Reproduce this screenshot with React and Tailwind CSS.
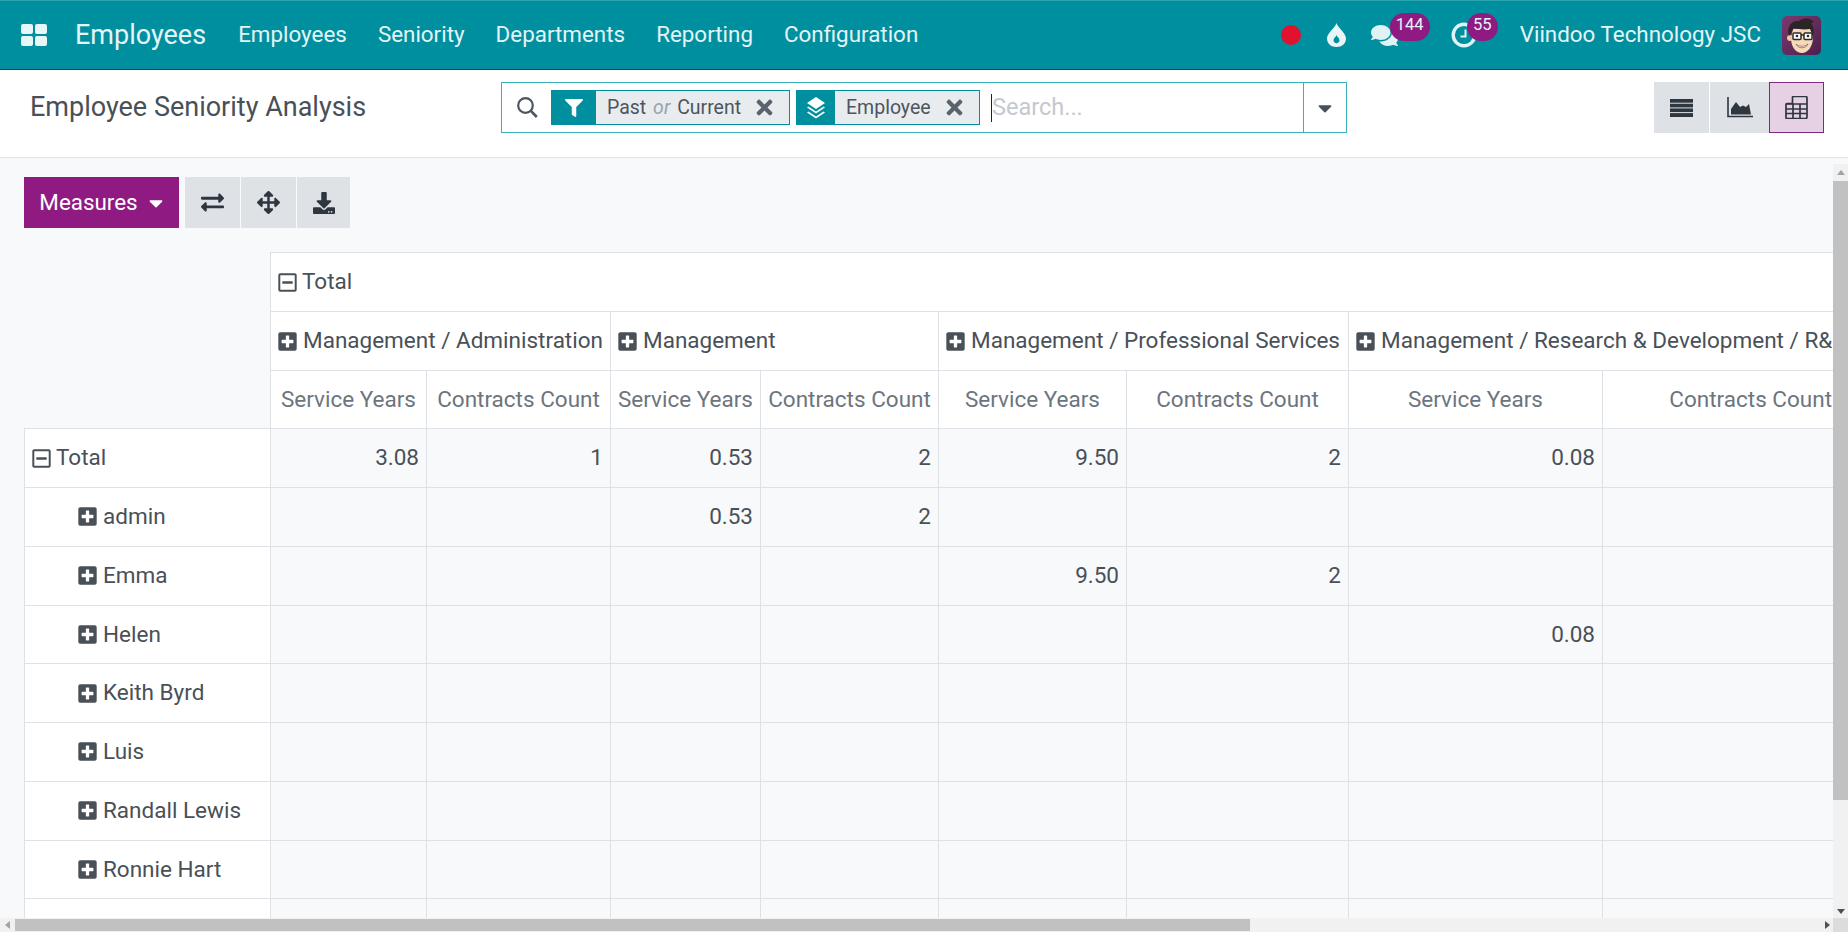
import React from 'react';
import {
  FaFilter, FaTimes, FaExchangeAlt, FaArrowsAlt, FaDownload,
  FaComments, FaPlusSquare, FaRegMinusSquare, FaCaretDown,
} from 'react-icons/fa';

const people = ['admin', 'Emma', 'Helen', 'Keith Byrd', 'Luis', 'Randall Lewis', 'Ronnie Hart'];

const values = {
  admin: { 2: '0.53', 3: '2' },
  Emma: { 4: '9.50', 5: '2' },
  Helen: { 6: '0.08' },
};

const colWidths = ['w-[246px]', 'w-[156px]', 'w-[184px]', 'w-[150px]', 'w-[178px]', 'w-[188px]', 'w-[222px]', 'w-[254px]', 'w-[241px]'];
const measures = [
  ['Service Years', 'Contracts Count'],
  ['Service Years', 'Contracts Count'],
  ['Service Years', 'Contracts Count'],
  ['Service Years', 'Contracts Count'],
];

function AppsIcon() {
  return (
    <svg width="26" height="22" viewBox="0 0 26 22" fill="#e8f6f7">
      <rect x="0" y="0" width="12" height="10" rx="2" />
      <rect x="14" y="0" width="12" height="10" rx="2" />
      <rect x="0" y="12" width="12" height="10" rx="2" />
      <rect x="14" y="12" width="12" height="10" rx="2" />
    </svg>
  );
}

function DropIcon() {
  return (
    <svg width="19" height="24" viewBox="0 0 19 24">
      <path d="M9.500 0C11 5 19 10 19 15.500 19 20.500 14.800 24 9.500 24S0 20.500 0 15.500C0 10 8 5 9.500 0z" fill="#e8f6f7" />
      <path d="M9.500 12c.6 2 3 3.200 3 5.300 0 1.700-1.300 2.900-3 2.900s-3-1.200-3-2.900c0-2.100 2.400-3.300 3-5.300z" fill="#008f9e" />
    </svg>
  );
}

function ClockIcon() {
  return (
    <svg width="26" height="26" viewBox="0 0 26 26" fill="none" stroke="#e0f3f5">
      <circle cx="13" cy="13" r="10.800" strokeWidth="3.400" />
      <path d="M14.500 7.500v7H9.500" strokeWidth="2" />
    </svg>
  );
}

function SearchIcon() {
  return (
    <svg width="21" height="21" viewBox="0 0 21 21" fill="none" stroke="#4c5560" strokeWidth="2.200" className="ml-[15px] mr-[13px] shrink-0">
      <circle cx="8.500" cy="8.500" r="7.300" />
      <path d="M13.800 13.800l6 6.200" strokeWidth="2.600" />
    </svg>
  );
}

function LayersIcon() {
  return (
    <svg width="18" height="22" viewBox="0 0 18 22" fill="#fff">
      <path d="M9 0l9 6-9 6-9-6z" />
      <path d="M1.500 9.500L9 14.500l7.500-5 1.500 1-9 6-9-6z" />
      <path d="M1.500 14.500L9 19.500l7.500-5 1.500 1-9 6-9-6z" />
    </svg>
  );
}

function ListIcon() {
  return (
    <svg width="23" height="18" viewBox="0 0 23 18" fill="#2f3640">
      <rect y="0" width="23" height="3.700" />
      <rect y="4.700" width="23" height="3.700" />
      <rect y="9.400" width="23" height="3.700" />
      <rect y="14.100" width="23" height="3.900" />
    </svg>
  );
}

function AreaIcon() {
  return (
    <svg width="26" height="21" viewBox="0 0 26 21">
      <path d="M1 0v19.500h25" fill="none" stroke="#2f3640" strokeWidth="1.600" />
      <path d="M4 17.500V12l5-7 4 5 3-1.500 3 1.500 3-3 2 10.500z" fill="#2f3640" />
    </svg>
  );
}

function PivotIcon() {
  return (
    <svg width="23" height="23" viewBox="0 0 23 23" fill="none" stroke="#2f3640" strokeWidth="1.700" strokeLinejoin="round">
      <path d="M7.500 1.500a1 1 0 0 1 1-1h12a1.500 1.500 0 0 1 1.500 1.500v19a1.500 1.500 0 0 1-1.500 1.500h-19A1 1 0 0 1 1 21.500V8.500a1 1 0 0 1 1-1h5.500z" />
      <path d="M1 8h21M1 13h21M1 17.500h21M8 8v14.500M15 8v14.500" />
    </svg>
  );
}

function Avatar() {
  return (
    <svg width="39" height="39" viewBox="0 0 39 39" className="shrink-0">
      <defs>
        <linearGradient id="avatarBg" x1="0" y1="0" x2="1" y2="1">
          <stop offset="0" stopColor="#7d3a6f" />
          <stop offset="1" stopColor="#4b1f4c" />
        </linearGradient>
      </defs>
      <rect width="39" height="39" rx="5" fill="url(#avatarBg)" />
      <path d="M9 22c0 9 5 15 11 15s11-7 11-16l-2-8H11z" fill="#f6d9b8" />
      <circle cx="8" cy="22" r="3" fill="#f0c9a4" />
      <path d="M7 20C4 9 11 4 17 5c4-4 13-3 15 1l-3 1c3 4 3 9 2 13l-3-7c-6 1-12 0-16-1-2 3-3 5-5 8z" fill="#2b2626" />
      <rect x="11" y="17" width="8" height="6.500" rx="1" fill="#fff" stroke="#2b2b2b" strokeWidth="1.500" />
      <rect x="22" y="17" width="8" height="6.500" rx="1" fill="#fff" stroke="#2b2b2b" strokeWidth="1.500" />
      <path d="M19 19h3" stroke="#2b2b2b" strokeWidth="1.500" />
      <circle cx="15" cy="20" r="1.300" fill="#2b2b2b" />
      <circle cx="26" cy="20" r="1.300" fill="#2b2b2b" />
      <path d="M14 28c3 3 9 3 12 0-2 5-10 5-12 0z" fill="#fff" stroke="#8a4b3a" strokeWidth=".7" />
    </svg>
  );
}

function Navbar() {
  return (
    <header className="flex h-[70px] shrink-0 items-center border-t border-t-[#2aa5b1] border-b border-b-[#00535c] bg-[#008f9e] text-[#e3f5f6]">
      <div className="ml-[21px] flex w-[54px]"><AppsIcon /></div>
      <span className="text-[27px]">Employees</span>
      <nav className="ml-[32px] flex gap-[31px] text-[22.400px]">
        <span>Employees</span>
        <span>Seniority</span>
        <span>Departments</span>
        <span>Reporting</span>
        <span>Configuration</span>
      </nav>
      <div className="ml-auto flex items-center text-[22.400px]">
        <span className="h-[20px] w-[20px] rounded-full bg-[#e0122f]" />
        <div className="ml-[26px]"><DropIcon /></div>
        <div className="relative ml-[25px]">
          <FaComments size={27} color="#dff3f5" />
          <span className="absolute left-[19px] top-[-9px] flex h-[28px] w-[40px] justify-center rounded-full bg-[#8f1b82] text-[16.500px] leading-[24px]">144</span>
        </div>
        <div className="relative ml-[53px]">
          <ClockIcon />
          <span className="absolute left-[16px] top-[-9px] flex h-[28px] w-[31px] justify-center rounded-full bg-[#8f1b82] text-[16.500px] leading-[24px]">55</span>
        </div>
        <span className="ml-[43px]">Viindoo Technology JSC</span>
        <div className="ml-[21px] mr-[27px]"><Avatar /></div>
      </div>
    </header>
  );
}

function Facet({ icon, width, iconWidth, children }) {
  return (
    <div className={`flex h-[35px] items-center border border-[#008f9e] bg-[#e9ecef] text-[19.500px] text-[#4c5560] ${width}`}>
      <div className={`flex h-full shrink-0 items-center justify-center bg-[#008f9e] ${iconWidth}`}>{icon}</div>
      <span className="ml-[11px] flex-1 whitespace-nowrap">{children}</span>
      <FaTimes size={23} color="#5a626b" className="mr-[13px] shrink-0" />
    </div>
  );
}

function ControlPanel() {
  return (
    <div className="flex h-[88px] shrink-0 items-start border-b border-[#dee2e6] bg-white text-[#495057]">
      <h1 className="ml-[30px] mt-[17px] w-[471px] whitespace-nowrap text-[27px] font-normal">Employee Seniority Analysis</h1>
      <div className="mt-[12px] flex h-[51px] w-[846px] items-center border border-[#3ab0bb]">
        <SearchIcon />
        <Facet width="w-[239px]" iconWidth="w-[44px]" icon={<FaFilter size={18} color="#fff" />}>
          Past <i className="mx-[2px] text-[#9aa1a8]">or</i> Current
        </Facet>
        <div className="w-[6px] shrink-0" />
        <Facet width="w-[184px]" iconWidth="w-[38px]" icon={<LayersIcon />}>Employee</Facet>
        <div className="ml-[11px] flex h-[28px] flex-1 items-center border-l border-[#222] text-[23.500px] text-[#c4c8cf]">Search...</div>
        <div className="flex h-full w-[43px] items-center justify-center border-l border-[#3ab0bb]">
          <FaCaretDown size={22} color="#495057" />
        </div>
      </div>
      <div className="ml-auto mr-[24px] mt-[12px] flex h-[51px]">
        <div className="flex w-[55px] items-center justify-center bg-[#dee2e6]"><ListIcon /></div>
        <div className="ml-px flex w-[59px] items-center justify-center bg-[#dee2e6]"><AreaIcon /></div>
        <div className="flex w-[55px] items-center justify-center border border-[#7c2c80] bg-[#e5d0e4]"><PivotIcon /></div>
      </div>
    </div>
  );
}

function ToolButton({ children, width }) {
  return <div className={`flex h-[51px] items-center justify-center bg-[#dee2e6] ${width}`}>{children}</div>;
}

function ExpandIcon({ open }) {
  return open
    ? <FaRegMinusSquare size={21} color="#495057" className="shrink-0" />
    : <FaPlusSquare size={21} color="#495057" className="shrink-0" />;
}

function RowHead({ open, indent, children }) {
  return (
    <th className={`border border-[#dee2e6] bg-white font-normal ${indent}`}>
      <div className={`flex items-center ${open ? 'gap-[4px]' : 'gap-[5px]'}`}>
        <ExpandIcon open={open} />
        <span className="whitespace-nowrap">{children}</span>
      </div>
    </th>
  );
}

function GroupHead({ label }) {
  return (
    <th colSpan={2} className="overflow-hidden border border-[#dee2e6] bg-white pl-[6px] font-normal">
      <div className="flex items-center gap-[5px] whitespace-nowrap">
        <ExpandIcon />
        <span>{label}</span>
      </div>
    </th>
  );
}

function PivotTable() {
  return (
    <table className="w-[1819px] table-fixed border-collapse text-[22.500px] text-[#495057]">
      <colgroup>
        {colWidths.map((w, i) => <col key={i} className={w} />)}
      </colgroup>
      <thead>
        <tr className="h-[59px]">
          <th rowSpan={3} />
          <th colSpan={8} className="border border-[#dee2e6] bg-white pl-[6px] font-normal">
            <div className="flex items-center gap-[4px]"><ExpandIcon open />Total</div>
          </th>
        </tr>
        <tr className="h-[59px]">
          <GroupHead label="Management / Administration" />
          <GroupHead label="Management" />
          <GroupHead label="Management / Professional Services" />
          <GroupHead label="Management / Research & Development / R&D USA" />
        </tr>
        <tr className="h-[58px]">
          {measures.flat().map((m, i) => (
            <th key={i} className="whitespace-nowrap border border-[#dee2e6] bg-white px-[7px] text-center font-normal text-[#6c757d] last:pr-[11px] last:text-right">{m}</th>
          ))}
        </tr>
      </thead>
      <tbody>
        <tr className="h-[59px]">
          <RowHead open indent="pl-[6px]">Total</RowHead>
          {['3.08', '1', '0.53', '2', '9.50', '2', '0.08', ''].map((v, i) => (
            <td key={i} className="border border-[#dee2e6] px-[7px] text-right">{v}</td>
          ))}
        </tr>
        {people.map((name) => (
          <tr key={name} className="h-[58.750px]">
            <RowHead indent="pl-[52px]">{name}</RowHead>
            {[0, 1, 2, 3, 4, 5, 6, 7].map((c) => (
              <td key={c} className="border border-[#dee2e6] px-[7px] text-right">{values[name]?.[c]}</td>
            ))}
          </tr>
        ))}
        <tr className="h-[59px]">
          <RowHead indent="pl-[52px]" />
          {[0, 1, 2, 3, 4, 5, 6, 7].map((c) => <td key={c} className="border border-[#dee2e6]" />)}
        </tr>
      </tbody>
    </table>
  );
}

function Scrollbars() {
  return (
    <>
      <div className="absolute bottom-[14px] right-0 top-[6px] flex w-[15px] flex-col items-center bg-[#f1f1f1]">
        <div className="mt-[6px] h-0 w-0 border-x-[4px] border-b-[5px] border-x-transparent border-b-[#a3a3a3]" />
        <div className="mt-[6px] h-[619px] w-full bg-[#c1c1c1]" />
        <div className="mb-[4px] mt-auto h-0 w-0 border-x-[4px] border-t-[5px] border-x-transparent border-t-[#505050]" />
      </div>
      <div className="absolute bottom-0 left-0 right-0 flex h-[14px] items-center bg-[#f1f1f1]">
        <div className="ml-[5px] h-0 w-0 border-y-[4px] border-r-[5px] border-y-transparent border-r-[#a3a3a3]" />
        <div className="ml-[5px] h-[12px] w-[1235px] bg-[#c1c1c1]" />
        <div className="ml-auto mr-[18px] h-0 w-0 border-y-[4px] border-l-[5px] border-y-transparent border-l-[#505050]" />
        <div className="absolute right-0 h-full w-[15px] bg-[#dcdcdc]" />
      </div>
    </>
  );
}

export default function App() {
  return (
    <div className="flex h-[932px] w-[1848px] flex-col overflow-hidden [font-family:Roboto,sans-serif]">
      <Navbar />
      <ControlPanel />
      <main className="relative flex-1 overflow-hidden bg-[#f8f9fa]">
        <div className="h-full w-[1833px] overflow-hidden pl-[24px] pt-[19px]">
          <div className="mb-[24px] flex">
            <button className="mr-[6px] flex h-[51px] w-[155px] items-center justify-center gap-[7px] bg-[#8f1b82] pl-[3px] text-[22.400px] text-white">
              Measures <FaCaretDown size={22} />
            </button>
            <div className="flex gap-px">
              <ToolButton width="w-[55px]"><FaExchangeAlt size={23} color="#2f3640" /></ToolButton>
              <ToolButton width="w-[55px]"><FaArrowsAlt size={23} color="#2f3640" /></ToolButton>
              <ToolButton width="w-[53px]"><FaDownload size={22} color="#2f3640" /></ToolButton>
            </div>
          </div>
          <PivotTable />
        </div>
        <Scrollbars />
      </main>
    </div>
  );
}
